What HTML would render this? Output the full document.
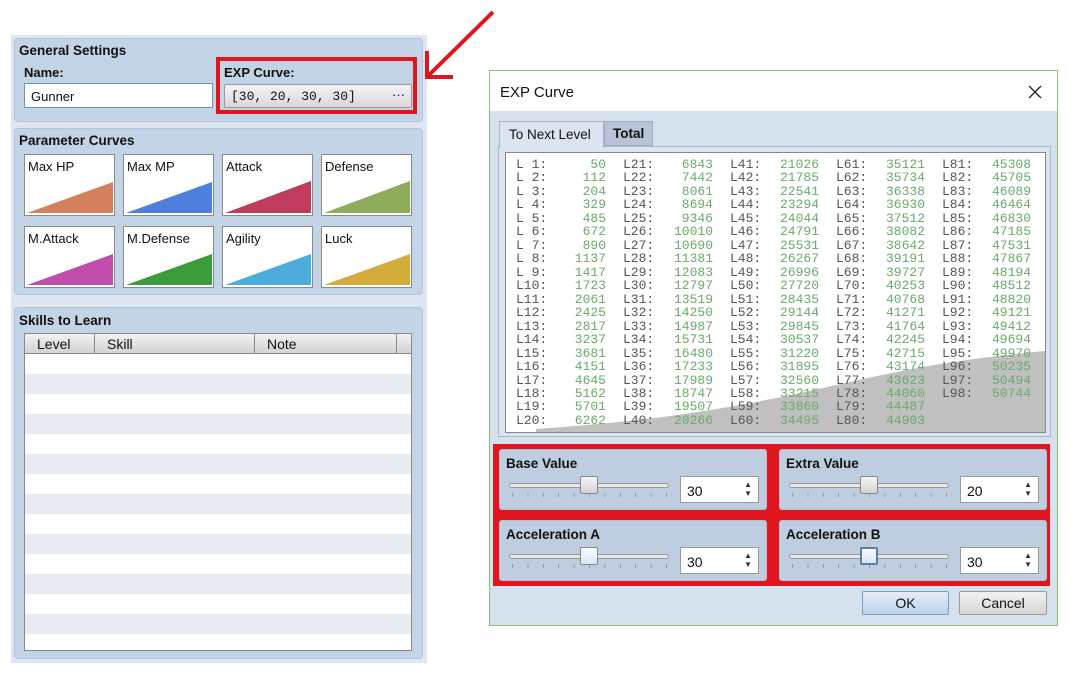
<!DOCTYPE html>
<html><head><meta charset="utf-8"><style>
*{box-sizing:border-box;margin:0;padding:0}
body{width:1074px;height:694px;background:#fff;position:relative;overflow:hidden;font-family:"Liberation Sans",sans-serif;font-size:13px;color:#111}
.a{position:absolute}
.grp{position:absolute;background:#c4d4e7;border-radius:4px;border:1px solid #b3c5dc}
.t{position:absolute;font-weight:bold;font-size:13.5px}
.card{position:absolute;width:91px;height:62px;background:#fff;border:1px solid #8a8a8a}
.card span{position:absolute;left:3px;top:4px;font-size:13px}
.card svg{position:absolute;left:2px;bottom:2px}
.col{position:absolute;font-family:"Liberation Mono",monospace;font-size:13px;line-height:13.47px;white-space:pre}
.lab{color:#555}
.val{color:#6aaa6a;text-align:right}
.sg{position:absolute;width:268px;height:61px;background:#bfcde0;border-radius:3px;border:1px solid #aebfd6}
.sg b{position:absolute;left:6px;top:6px;font-size:13.5px}
.trk{position:absolute;left:9px;top:33px;width:160px;height:5px;border:1px solid #999;border-radius:3px;background:#e8e8e8}
.thm{position:absolute;top:26px;width:18px;height:18px;border:1px solid #888;border-radius:2px;background:linear-gradient(#f4f4f4,#d4d4d4)}
.tk{position:absolute;left:12px;top:43px;width:155px;height:4px;background:repeating-linear-gradient(90deg,#999 0 1px,transparent 1px 15.4px)}
.spn{position:absolute;left:180px;top:26px;width:79px;height:27px;background:#fff;border:1px solid #999;font-size:14px;padding:6px 0 0 6px}
.spn i{position:absolute;right:6px;top:3px;font-style:normal;font-size:8px;line-height:9px;color:#333}
.btn{position:absolute;height:24px;border:1px solid #999;border-radius:2px;text-align:center;font-size:14px;line-height:22px}
</style></head><body>
<!-- left panel -->
<div class="a" style="left:11px;top:35px;width:416px;height:628px;background:#dde7f2"></div>
<div class="grp" style="left:14px;top:38px;width:409px;height:84px"></div>
<div class="t" style="left:19px;top:43px">General Settings</div>
<div class="a" style="left:24px;top:65px;font-weight:bold;font-size:13px">Name:</div>
<div class="a" style="left:24px;top:83px;width:189px;height:25px;background:#fff;border:1px solid #6f8fb3;padding:5px 0 0 6px;font-size:13px">Gunner</div>
<div class="a" style="left:216px;top:57px;width:201px;height:57px;border:4px solid #e0161f"></div>
<div class="a" style="left:224px;top:65px;font-weight:bold;font-size:13px">EXP Curve:</div>
<div class="a" style="left:224px;top:84px;width:188px;height:24px;border:1px solid #999;border-radius:2px;background:linear-gradient(#f4f4f4,#d8d8d8);font-family:'Liberation Mono',monospace;font-size:13px;padding:4px 0 0 6px">[30, 20, 30, 30]<span style="position:absolute;right:6px;top:2px;font-family:'Liberation Sans'">···</span></div>

<div class="grp" style="left:14px;top:128px;width:409px;height:167px"></div>
<div class="t" style="left:19px;top:133px">Parameter Curves</div>
<div class="card" style="left:24px;top:154px"><span>Max HP</span><svg width="86" height="32"><polygon points="0,32 86,1 86,32" fill="#d4805c"/></svg></div>
<div class="card" style="left:123px;top:154px"><span>Max MP</span><svg width="86" height="32"><polygon points="0,32 86,1 86,32" fill="#4f7fdc"/></svg></div>
<div class="card" style="left:222px;top:154px"><span>Attack</span><svg width="86" height="32"><polygon points="0,32 86,0 86,32" fill="#c03c5c"/></svg></div>
<div class="card" style="left:321px;top:154px"><span>Defense</span><svg width="86" height="32"><polygon points="0,32 86,0 86,32" fill="#8eac5c"/></svg></div>
<div class="card" style="left:24px;top:226px"><span>M.Attack</span><svg width="86" height="32"><polygon points="0,32 86,1 86,32" fill="#c04cac"/></svg></div>
<div class="card" style="left:123px;top:226px"><span>M.Defense</span><svg width="86" height="32"><polygon points="0,32 86,1 86,32" fill="#3c9c3c"/></svg></div>
<div class="card" style="left:222px;top:226px"><span>Agility</span><svg width="86" height="32"><polygon points="0,32 86,1 86,32" fill="#4cacdc"/></svg></div>
<div class="card" style="left:321px;top:226px"><span>Luck</span><svg width="86" height="32"><polygon points="0,32 86,1 86,32" fill="#d4ac3c"/></svg></div>

<div class="grp" style="left:14px;top:307px;width:409px;height:352px"></div>
<div class="t" style="left:19px;top:313px">Skills to Learn</div>
<div class="a" style="left:24px;top:333px;width:388px;height:318px;border:1px solid #888;background:repeating-linear-gradient(#fff 0 20px,#e6eaef 20px 40px) 0 20px/100% 40px no-repeat,#fff;background:#fff">
 <div class="a" style="left:0;top:20px;width:386px;height:296px;background:repeating-linear-gradient(#fff 0 20px,#e8ebf0 20px 40px)"></div>
 <div class="a" style="left:0;top:0;width:386px;height:20px;background:linear-gradient(#f2f2f2,#d2d2d2);border-bottom:1px solid #888;font-size:14px">
  <span class="a" style="left:12px;top:2px">Level</span>
  <span class="a" style="left:69px;top:0;height:20px;border-left:1px solid #888"></span>
  <span class="a" style="left:82px;top:2px">Skill</span>
  <span class="a" style="left:229px;top:0;height:20px;border-left:1px solid #888"></span>
  <span class="a" style="left:242px;top:2px">Note</span>
  <span class="a" style="left:371px;top:0;height:20px;border-left:1px solid #888"></span>
 </div>
</div>

<!-- arrow -->
<svg class="a" style="left:415px;top:5px" width="85" height="85"><line x1="78" y1="7" x2="14" y2="70" stroke="#e0161f" stroke-width="4"/><polyline points="12,46 12,72 38,72" fill="none" stroke="#e0161f" stroke-width="4"/></svg>

<!-- dialog -->
<div class="a" style="left:489px;top:70px;width:569px;height:556px;border:1px solid #8cc070;background:#d6e1ee"></div>
<div class="a" style="left:490px;top:71px;width:567px;height:40px;background:#fff"></div>
<div class="a" style="left:500px;top:84px;font-size:15px">EXP Curve</div>
<svg class="a" style="left:1028px;top:85px" width="14" height="14"><path d="M1 1L13 13M13 1L1 13" stroke="#222" stroke-width="1.3"/></svg>
<div class="a" style="left:498px;top:146px;width:553px;height:291px;background:#dbe5f1;border:1px solid #a8b6c8"></div>
<div class="a" style="left:499px;top:121px;width:105px;height:27px;background:#dbe5f1;border:1px solid #a8b6c8;border-bottom:none;font-size:13.5px;padding:5px 0 0 9px">To Next Level</div>
<div class="a" style="left:604px;top:121px;width:49px;height:25px;background:#b6c4d6;border:1px solid #a0aec0;font-weight:bold;font-size:13.5px;padding:4px 0 0 8px">Total</div>
<div class="a" style="left:505px;top:152px;width:541px;height:281px;background:#fff;border:1px solid #888"></div>
<svg class="a" style="left:506px;top:153px" width="539" height="279"><path d="M30 276 C150 268 230 255 330 232 C400 216 460 205 539 198 L539 279 L30 279Z" fill="#c0c0c0"/></svg>
<div class="col lab" style="left:516px;top:158px">L 1:
L 2:
L 3:
L 4:
L 5:
L 6:
L 7:
L 8:
L 9:
L10:
L11:
L12:
L13:
L14:
L15:
L16:
L17:
L18:
L19:
L20:</div>
<div class="col val" style="left:556px;top:158px;width:50px">50
112
204
329
485
672
890
1137
1417
1723
2061
2425
2817
3237
3681
4151
4645
5162
5701
6262</div>
<div class="col lab" style="left:623px;top:158px">L21:
L22:
L23:
L24:
L25:
L26:
L27:
L28:
L29:
L30:
L31:
L32:
L33:
L34:
L35:
L36:
L37:
L38:
L39:
L40:</div>
<div class="col val" style="left:663px;top:158px;width:50px">6843
7442
8061
8694
9346
10010
10690
11381
12083
12797
13519
14250
14987
15731
16480
17233
17989
18747
19507
20266</div>
<div class="col lab" style="left:730px;top:158px">L41:
L42:
L43:
L44:
L45:
L46:
L47:
L48:
L49:
L50:
L51:
L52:
L53:
L54:
L55:
L56:
L57:
L58:
L59:
L60:</div>
<div class="col val" style="left:769px;top:158px;width:50px">21026
21785
22541
23294
24044
24791
25531
26267
26996
27720
28435
29144
29845
30537
31220
31895
32560
33215
33860
34495</div>
<div class="col lab" style="left:836px;top:158px">L61:
L62:
L63:
L64:
L65:
L66:
L67:
L68:
L69:
L70:
L71:
L72:
L73:
L74:
L75:
L76:
L77:
L78:
L79:
L80:</div>
<div class="col val" style="left:875px;top:158px;width:50px">35121
35734
36338
36930
37512
38082
38642
39191
39727
40253
40768
41271
41764
42245
42715
43174
43623
44060
44487
44903</div>
<div class="col lab" style="left:942px;top:158px">L81:
L82:
L83:
L84:
L85:
L86:
L87:
L88:
L89:
L90:
L91:
L92:
L93:
L94:
L95:
L96:
L97:
L98:</div>
<div class="col val" style="left:981px;top:158px;width:50px">45308
45705
46089
46464
46830
47185
47531
47867
48194
48512
48820
49121
49412
49694
49970
50235
50494
50744</div>

<!-- sliders -->
<div class="a" style="left:493px;top:444px;width:557px;height:142px;background:#e0161f"></div>
<div class="sg" style="left:499px;top:449px"><b>Base Value</b><div class="trk"></div><div class="tk"></div><div class="thm" style="left:80px"></div><div class="spn">30<i>▲<br>▼</i></div></div>
<div class="sg" style="left:779px;top:449px"><b>Extra Value</b><div class="trk"></div><div class="tk"></div><div class="thm" style="left:80px"></div><div class="spn">20<i>▲<br>▼</i></div></div>
<div class="sg" style="left:499px;top:520px"><b>Acceleration A</b><div class="trk"></div><div class="tk"></div><div class="thm" style="left:80px;background:linear-gradient(#fafcff,#d8e6f4)"></div><div class="spn">30<i>▲<br>▼</i></div></div>
<div class="sg" style="left:779px;top:520px"><b>Acceleration B</b><div class="trk"></div><div class="tk"></div><div class="thm" style="left:80px;border:2px solid #5a7ea8;background:linear-gradient(#fafcff,#d8e6f4)"></div><div class="spn">30<i>▲<br>▼</i></div></div>
<div class="btn" style="left:862px;top:591px;width:87px;background:linear-gradient(#e4eef8,#bcd2ea);border-color:#7a9cc0">OK</div>
<div class="btn" style="left:959px;top:591px;width:88px;background:linear-gradient(#f2f2f2,#d6d6d6)">Cancel</div>
</body></html>
